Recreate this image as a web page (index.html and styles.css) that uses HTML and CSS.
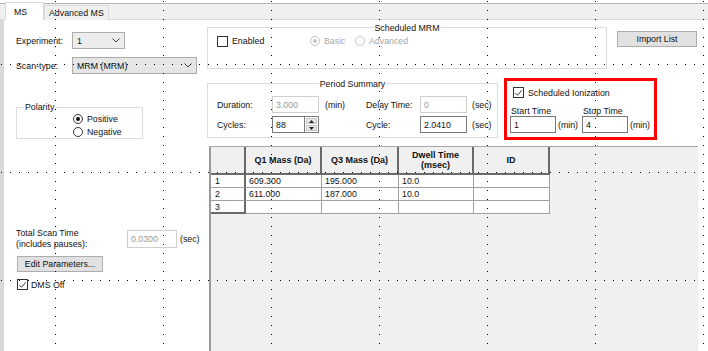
FILE: index.html
```html
<!DOCTYPE html>
<html>
<head>
<meta charset="utf-8">
<link rel="stylesheet" href="styles.css">
</head>
<body>
<div class="window">
  <div class="tabs">
    <div class="tabbar">
      <div class="tab tab-active">MS</div>
      <div class="tab">Advanced MS</div>
    </div>
  </div>
  <div class="page">
    <div class="left">
      <div class="field f-exp">
        <span class="lbl">Experiment:</span>
        <div class="combo c-exp"><span>1</span><svg class="chev" width="8" height="5" viewBox="0 0 8 5"><polyline points="0.5,0.5 4,4 7.5,0.5"/></svg></div>
      </div>
      <div class="field f-scan">
        <span class="lbl">Scan-type:</span>
        <div class="combo c-scan"><span>MRM (MRM)</span><svg class="chev" width="8" height="5" viewBox="0 0 8 5"><polyline points="0.5,0.5 4,4 7.5,0.5"/></svg></div>
      </div>
      <div class="group polarity">
        <span class="gtitle gt-pol">Polarity</span>
        <div class="radio"><span class="rb rb-on"></span><span>Positive</span></div>
        <div class="radio"><span class="rb"></span><span>Negative</span></div>
      </div>
      <div class="total">
        <div class="total-lbl"><div>Total Scan Time</div><div>(includes pauses):</div></div>
        <div class="tb tb-dis tb-total">0.0300</div>
        <span class="unit-sec">(sec)</span>
      </div>
      <div class="btn btn-edit">Edit Parameters...</div>
      <div class="check c-dms"><span class="cb"><svg width="10" height="10" viewBox="0 0 10 10"><polyline points="1.5,5 4,7.5 8.5,2"/></svg></span><span>DMS Off</span></div>
    </div>

    <div class="right">
      <div class="row1">
        <div class="group smrm">
          <span class="gtitle gt-center">Scheduled MRM</span>
          <div class="smrm-row">
            <div class="check w-enabled"><span class="cb"></span><span>Enabled</span></div>
            <div class="radio dis w-basic"><span class="rb rb-on"></span><span>Basic</span></div>
            <div class="radio dis"><span class="rb"></span><span>Advanced</span></div>
          </div>
        </div>
        <div class="btn btn-import">Import List</div>
      </div>

      <div class="row2">
        <div class="group period">
          <span class="gtitle gt-center">Period Summary</span>
          <div class="pgrid">
            <span class="lbl">Duration:</span>
            <div class="tb tb-dis">3.000</div>
            <span class="unit">(min)</span>
            <span class="lbl">Delay Time:</span>
            <div class="tb tb-dis">0</div>
            <span class="unit">(sec)</span>

            <span class="lbl">Cycles:</span>
            <div class="spin">
              <div class="tb spin-tb">88</div>
              <div class="spin-btns">
                <div class="sb"><svg width="5" height="3" viewBox="0 0 5 3"><polygon points="2.5,0 5,3 0,3"/></svg></div>
                <div class="sb"><svg width="5" height="3" viewBox="0 0 5 3"><polygon points="0,0 5,0 2.5,3"/></svg></div>
              </div>
            </div>
            <span></span>
            <span class="lbl">Cycle:</span>
            <div class="tb">2.0410</div>
            <span class="unit">(sec)</span>
          </div>
        </div>

        <div class="redbox">
          <div class="check c-ion"><span class="cb"><svg width="10" height="10" viewBox="0 0 10 10"><polyline points="1.5,5 4,7.5 8.5,2"/></svg></span><span>Scheduled Ionization</span></div>
          <div class="times">
            <div class="tcol">
              <div class="tlbl">Start Time</div>
              <div class="tline"><div class="tb tb-time">1</div><span class="tunit">(min)</span></div>
            </div>
            <div class="tcol">
              <div class="tlbl">Stop Time</div>
              <div class="tline"><div class="tb tb-time">4</div><span class="tunit">(min)</span></div>
            </div>
          </div>
        </div>
      </div>

      <div class="gridarea">
        <table class="mrm">
          <thead>
            <tr>
              <th class="corner"></th>
              <th class="c-q1">Q1 Mass (Da)</th>
              <th class="c-q3">Q3 Mass (Da)</th>
              <th class="c-dw">Dwell Time<br>(msec)</th>
              <th class="c-id">ID</th>
            </tr>
          </thead>
          <tbody>
            <tr><td class="rh">1</td><td>609.300</td><td>195.000</td><td>10.0</td><td></td></tr>
            <tr><td class="rh">2</td><td>611.000</td><td>187.000</td><td>10.0</td><td></td></tr>
            <tr><td class="rh">3</td><td></td><td></td><td></td><td></td></tr>
          </tbody>
        </table>
      </div>
    </div>
  </div>

  <svg class="dots" width="708" height="351" viewBox="0 0 708 351">
    <g stroke="#000" stroke-width="1" stroke-dasharray="1 8" fill="none">
      <line x1="55.5" y1="1" x2="55.5" y2="351"/>
      <line x1="163.5" y1="1" x2="163.5" y2="351"/>
      <line x1="271.5" y1="1" x2="271.5" y2="351"/>
      <line x1="379.5" y1="1" x2="379.5" y2="351"/>
      <line x1="487.5" y1="1" x2="487.5" y2="351"/>
      <line x1="595.5" y1="1" x2="595.5" y2="351"/>
      <line x1="703.5" y1="1" x2="703.5" y2="351"/>
      <line x1="1" y1="64.5" x2="708" y2="64.5"/>
      <line x1="1" y1="172.5" x2="708" y2="172.5"/>
      <line x1="1" y1="280.5" x2="708" y2="280.5"/>
    </g>
  </svg>
</div>
</body>
</html>
```

FILE: styles.css
```css
* { box-sizing: border-box; }

body {
  margin: 0;
  background: #fff;
  font-family: "Liberation Sans", Arial, sans-serif;
  font-size: 8.8px;
  line-height: 10px;
  color: #111;
}

.window {
  position: relative;
  width: 708px;
  height: 351px;
  overflow: hidden;
  background: #fff;
}

/* tabs */
.tabs {
  height: 20px;
  padding-top: 3px;
  background: #fff;
}
.tabbar {
  height: 17px;
  display: flex;
  align-items: flex-end;
  padding-left: 5px;
  background: #f0f0f0;
  border-top: 1px solid #b4b4b4;
  border-bottom: 1px solid #d9d9d9;
}
.tab {
  height: 15px;
  padding: 0 4px;
  display: flex;
  align-items: center;
  background: #f0f0f0;
  border: 1px solid #d9d9d9;
  border-bottom: none;
  margin-bottom: -1px;
}
.tab-active {
  height: 18px;
  width: 39px;
  padding-left: 8px;
  background: #fff;
  margin-top: -2px;
}

/* page */
.page {
  display: flex;
  height: 331px;
}

.left {
  width: 207px;
  flex: none;
  border-left: 4px solid #d8d8d8;
  padding-left: 12px;
  display: flex;
  flex-direction: column;
  align-items: flex-start;
}

.field {
  display: flex;
  align-items: center;
  height: 17px;
}
.field .lbl { width: 56px; }
.f-exp { margin-top: 12px; }
.f-scan { margin-top: 8px; }

.combo {
  height: 17px;
  border: 1px solid #adadad;
  background: #e5e5e5;
  display: flex;
  align-items: center;
  justify-content: space-between;
  padding: 0 4px 0 4px;
}
.c-exp { width: 53px; background: #ececec; }
.c-scan { width: 125px; }
.chev polyline { fill: none; stroke: #444; stroke-width: 1; }

.group {
  position: relative;
  border: 1px solid #dcdcdc;
}
.gtitle {
  position: absolute;
  background: #fff;
  padding: 0 1px;
  line-height: 10px;
  white-space: nowrap;
}
.gt-pol { top: -6px; left: 7px; }
.gt-center { top: -5px; left: 50%; transform: translateX(-50%); }

.polarity {
  margin-top: 33px;
  width: 127px;
  height: 32px;
  padding: 5px 0 0 56px;
  display: flex;
  flex-direction: column;
}

.radio {
  display: flex;
  align-items: center;
  height: 13px;
  gap: 4px;
}
.rb {
  width: 10px;
  height: 10px;
  border-radius: 50%;
  border: 1px solid #333;
  background: #fff;
  position: relative;
  flex: none;
}
.rb-on::after {
  content: "";
  position: absolute;
  left: 2px;
  top: 2px;
  width: 4px;
  height: 4px;
  border-radius: 50%;
  background: #111;
}
.radio.dis { color: #a6a6a6; }
.radio.dis .rb { border-color: #c4c4c4; }
.radio.dis .rb-on::after { background: #c4c4c4; }

.total {
  margin-top: 89px;
  display: flex;
  align-items: center;
  height: 21px;
}
.total-lbl {
  width: 111px;
  line-height: 10.5px;
}
.tb {
  height: 17px;
  border: 1px solid #7a7a7a;
  background: #fff;
  display: flex;
  align-items: center;
  padding-left: 3px;
}
.tb-dis {
  border-color: #cfcfcf;
  color: #9a9a9a;
}
.tb-total { width: 50px; height: 18px; }
.unit-sec { margin-left: 3px; }

.btn {
  height: 16px;
  background: #e1e1e1;
  border: 1px solid #adadad;
  display: flex;
  align-items: center;
  justify-content: center;
}
.btn-edit {
  margin-top: 7px;
  margin-left: 1px;
  width: 86px;
}

.check {
  display: flex;
  align-items: center;
  gap: 3px;
  height: 11px;
}
.cb {
  width: 11px;
  height: 11px;
  border: 1px solid #333;
  background: #fff;
  flex: none;
  display: flex;
  align-items: center;
  justify-content: center;
}
.cb polyline { fill: none; stroke: #222; stroke-width: 1; }
.c-dms { margin-top: 7px; margin-left: 1px; }

/* right side */
.right {
  flex: 1;
  display: flex;
  flex-direction: column;
}
.row1 {
  margin-top: 7px;
  display: flex;
  align-items: flex-start;
}
.smrm {
  width: 400px;
  height: 42px;
  padding: 7px 0 0 9px;
}
.smrm-row {
  display: flex;
  align-items: center;
  height: 12px;
}
.w-enabled { width: 93px; gap: 4px; }
.w-basic { width: 45px; }
.btn-import {
  margin: 4px 0 0 10px;
  width: 80px;
}

.row2 {
  margin-top: 9px;
  display: flex;
  align-items: flex-start;
}
.period {
  margin-top: 5px;
  width: 291px;
  height: 55px;
  padding: 12px 0 0 9px;
}
.pgrid {
  display: grid;
  grid-template-columns: 55px 47px 47px 54px 47px auto;
  grid-template-rows: 17px 17px;
  row-gap: 3px;
  align-items: center;
}
.pgrid .unit { padding-left: 6px; }
.pgrid > .tb + .unit:last-child, .pgrid .unit { }
.pgrid > :nth-child(6), .pgrid > :nth-child(12) { padding-left: 5px; }

.spin {
  display: flex;
  height: 17px;
}
.spin-tb { width: 33px; }
.spin-btns {
  width: 14px;
  height: 17px;
  border: 1px solid #7a7a7a;
  border-left: none;
  display: flex;
  flex-direction: column;
  background: #fff;
  padding: 1px;
  gap: 1px;
}
.sb {
  flex: 1;
  background: #e5e5e5;
  border: 1px solid #c8c8c8;
  display: flex;
  align-items: center;
  justify-content: center;
}
.sb polygon { fill: #222; }

.redbox {
  margin-left: 6px;
  width: 153px;
  height: 62px;
  border: 3px solid #ff0000;
  padding: 6px 0 0 3px;
}
.c-ion { margin-left: 3px; gap: 4px; height: 11px; }
.times {
  margin-top: 9px;
  display: flex;
}
.tcol { width: 73px; }
.tlbl { line-height: 9px; height: 9px; padding-left: 1px; }
.tline {
  display: flex;
  align-items: center;
}
.tb-time { width: 46px; }
.tunit { margin-left: 2px; }

.gridarea {
  margin: 6px 0 0 2px;
  width: 489px;
  flex: 1;
  background: #f0f0f0;
  border-left: 2px solid #9a9a9a;
  border-top: 1px solid #a8a8a8;
}

.mrm {
  border-collapse: separate;
  border-spacing: 0;
  table-layout: fixed;
  width: 339px;
  font-size: 8.8px;
}
.mrm th {
  height: 28px;
  background: #f0f0f0;
  font-weight: bold;
  font-size: 9px;
  line-height: 10px;
  text-align: center;
  border-right: 2px solid #6a6a6a;
  border-bottom: 2px solid #6a6a6a;
  padding: 0;
}
.mrm th.corner { width: 35px; }
.mrm th.c-q1 { width: 76px; }
.mrm th.c-q3 { width: 77px; }
.mrm th.c-dw { width: 75px; }
.mrm th.c-id { width: 76px; }
.mrm td {
  height: 13px;
  background: #fff;
  border-right: 1px solid #a0a0a0;
  border-bottom: 1px solid #a0a0a0;
  padding: 0 0 0 3px;
  line-height: 10px;
}
.mrm td.rh {
  border-right: 2px solid #6a6a6a;
  padding-left: 4px;
}
.mrm tr:last-child td.rh { border-bottom: 2px solid #6a6a6a; }

.dots {
  position: absolute;
  left: 0;
  top: 0;
  pointer-events: none;
}
```
